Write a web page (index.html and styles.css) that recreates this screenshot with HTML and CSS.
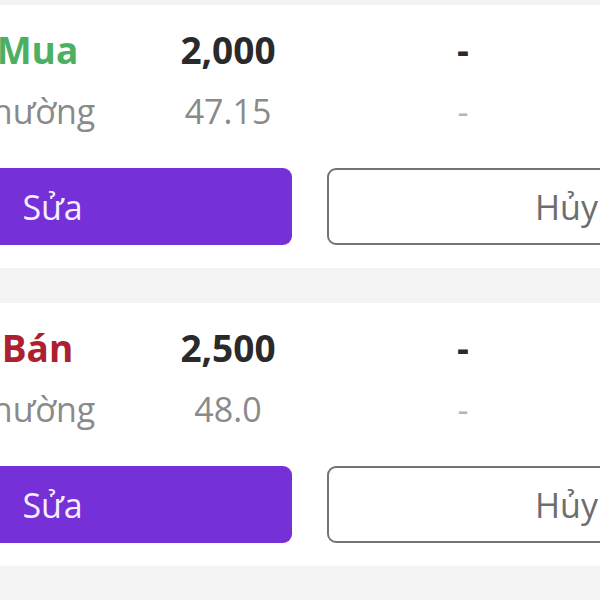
FILE: index.html
```html
<!DOCTYPE html>
<html lang="vi">
<head>
<meta charset="utf-8">
<title>Lệnh</title>
<link rel="stylesheet" href="styles.css">
</head>
<body>
<div class="list">
  <section class="card">
    <div class="row row-main">
      <div class="cell side buy">Mua</div>
      <div class="cell qty">2,000</div>
      <div class="cell dash">-</div>
    </div>
    <div class="row row-sub">
      <div class="cell">thường</div>
      <div class="cell">47.15</div>
      <div class="cell dash-sub">-</div>
    </div>
    <div class="actions">
      <button class="btn btn-edit">Sửa</button>
      <button class="btn btn-cancel">Hủy</button>
    </div>
  </section>
  <section class="card">
    <div class="row row-main">
      <div class="cell side sell">Bán</div>
      <div class="cell qty">2,500</div>
      <div class="cell dash">-</div>
    </div>
    <div class="row row-sub">
      <div class="cell">thường</div>
      <div class="cell">48.0</div>
      <div class="cell dash-sub">-</div>
    </div>
    <div class="actions">
      <button class="btn btn-edit">Sửa</button>
      <button class="btn btn-cancel">Hủy</button>
    </div>
  </section>
</div>
</body>
</html>
```
FILE: styles.css
```css
html, body {
  margin: 0;
  padding: 0;
  overflow: hidden;
  background: #f4f4f4;
  width: 600px;
  height: 600px;
}

body {
  font-family: "Open Sans", "Noto Sans", sans-serif;
}

.list {
  margin-left: -187px;
  width: 993px;
  padding-top: 5px;
  display: flex;
  flex-direction: column;
  gap: 35px;
}

.card {
  background: #ffffff;
  padding: 19px 40px 23px;
  margin: 0 -40px;
}

.row {
  display: grid;
  grid-template-columns: 100px 249px 132px 338px;
  text-align: center;
}

.row .cell:first-child {
  grid-column: 2;
}

.row-main {
  font-size: 37px;
  line-height: 52px;
  font-weight: 700;
  color: #2a2a2a;
}

.row-sub {
  margin-top: 12px;
  font-size: 34px;
  line-height: 46px;
  font-weight: 400;
  color: #8a8a8a;
}

.buy {
  color: #4caf62;
}

.sell {
  color: #ac2130;
}

.dash-sub {
  color: #b5b5b5;
}

.actions {
  margin-top: 34px;
  display: grid;
  grid-template-columns: 479px 479px;
  gap: 35px;
}

.btn {
  height: 77px;
  border-radius: 9px;
  font-family: "Open Sans", "Noto Sans", sans-serif;
  font-size: 34px;
  padding: 0;
  box-sizing: border-box;
}

.btn-edit {
  background: #7530d8;
  border: none;
  color: #f5effd;
  font-weight: 500;
}

.btn-cancel {
  background: #ffffff;
  border: 2px solid #747474;
  color: #6d6d6d;
  font-weight: 400;
}
```
